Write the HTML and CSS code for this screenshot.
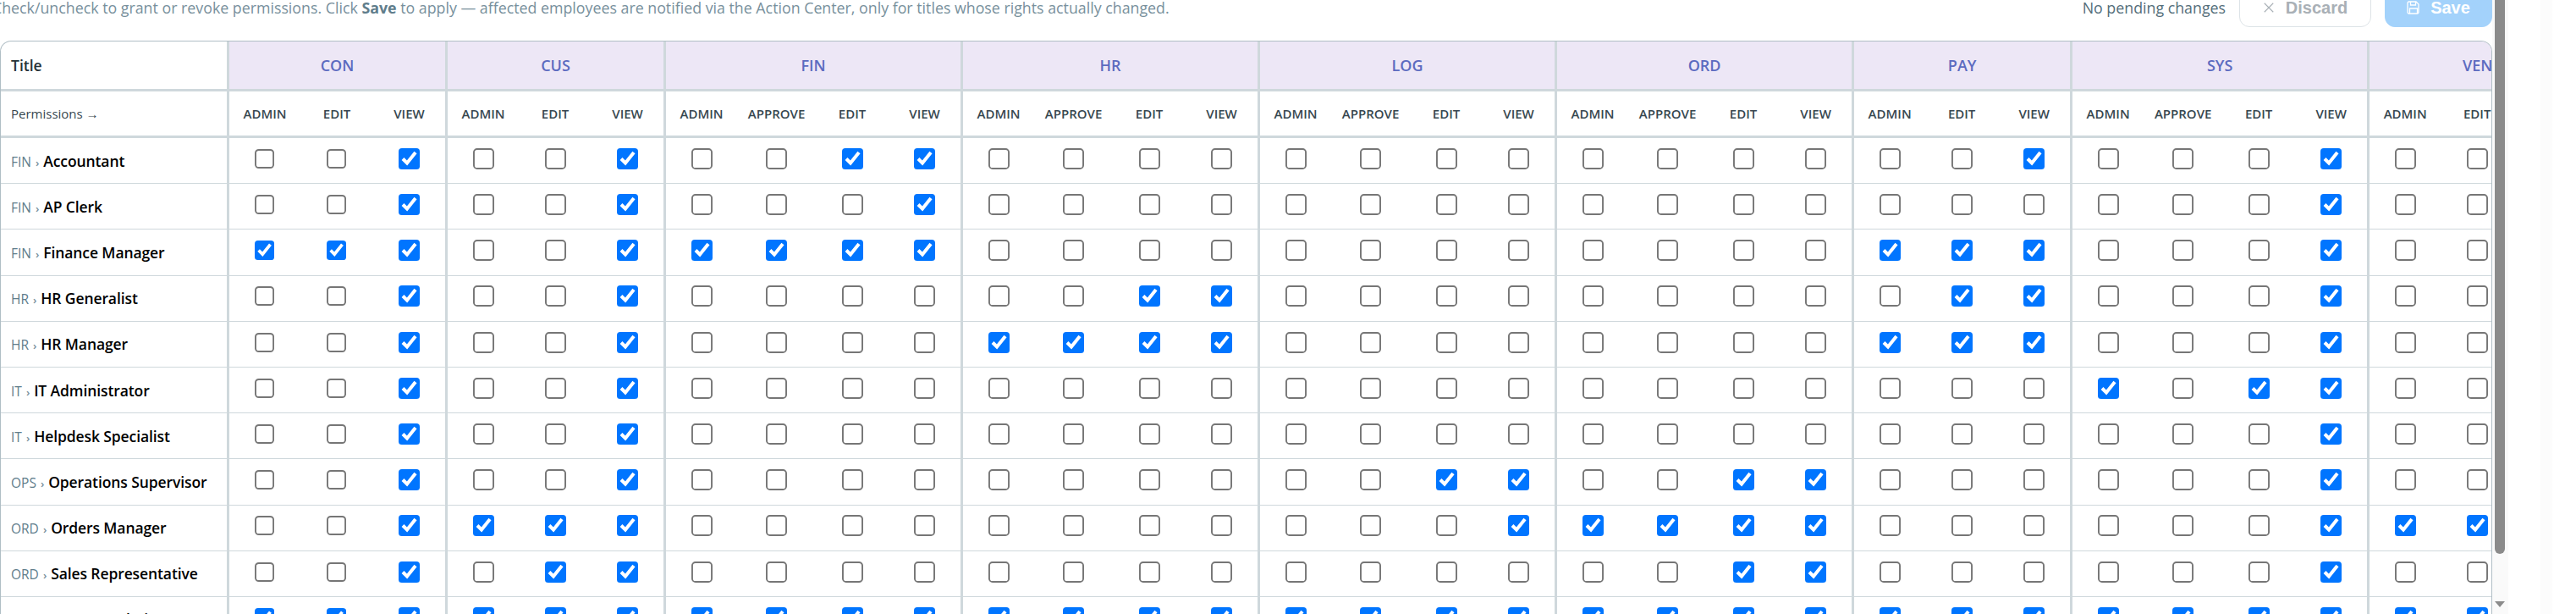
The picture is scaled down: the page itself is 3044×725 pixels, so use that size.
FILE: index.html
```html
<!DOCTYPE html>
<html lang="en">
<head>
<meta charset="utf-8">
<title>Title permissions</title>
<link rel="stylesheet" href="styles.css">
</head>
<body>
<div class="shell">
  <main class="main">
    <div class="toolbar">
      <p class="note">Check/uncheck to grant or revoke permissions. Click <strong>Save</strong> to apply — affected employees are notified via the Action Center, only for titles whose rights actually changed.</p>
      <div class="actions">
        <span class="status">No pending changes</span>
        <button class="btn btn-discard" type="button">
          <svg class="icon" viewBox="0 0 16 16"><path d="M2 2l12 12M14 2L2 14"/></svg>Discard
        </button>
        <button class="btn btn-save" type="button">
          <svg class="icon" viewBox="0 0 16 16"><path d="M2.5 1h8.5l3 3v9.5a1.5 1.5 0 0 1-1.5 1.5h-10A1.5 1.5 0 0 1 1 13.500v-11A1.500 1.500 0 0 1 2.500 1zM4.500 1v4h6V1M3.500 15V9h9v6"/></svg>Save
        </button>
      </div>
    </div>
    <div class="table-wrap">
      <table class="matrix" id="matrix"></table>
    </div>
  </main>
  <div class="scrollbar"><div class="thumb"></div><div class="arrow"></div></div>
  <div class="band"></div>
</div>
<script src="app.js"></script>
</body>
</html>
```

FILE: styles.css
```css
* { box-sizing: border-box; }
html, body { margin: 0; height: 725px; overflow: hidden; background: #fff; }
body { font-family: "Open Sans", "Noto Sans", sans-serif; color: #212529; }

.shell { display: flex; height: 725px; overflow: hidden; }
.main { flex: 0 0 2945px; width: 2945px; min-width: 0; }

.toolbar {
  display: flex; align-items: center; justify-content: space-between;
  height: 46px; margin: -14px 0 16px;
}
.note { margin: 0 0 0 -9px; font-size: 17.8px; color: #78909c; white-space: nowrap; }
.note strong { color: #607d8b; font-weight: 700; }
.actions { display: flex; align-items: center; gap: 16px; }
.status { font-size: 17.8px; color: #546e7a; white-space: nowrap; }

.btn {
  display: flex; align-items: center; justify-content: center; height: 46px;
  border-radius: 12px; font-family: "Liberation Sans", Arial, sans-serif;
  font-size: 20px; font-weight: 700; padding: 0;
}
.icon { width: 16px; height: 16px; fill: none; stroke: currentColor; stroke-width: 1.3; }
.btn-discard { width: 156px; gap: 13px; background: #fff; border: 1px solid #dde3e7; color: #a9b0b6; }
.btn-discard .icon { width: 14px; height: 14px; }
.btn-save { width: 127px; gap: 12px; background: #a3d2fb; border: 1px solid #a3d2fb; color: #fff; }

.table-wrap {
  width: 2945px; height: 700px; overflow: hidden;
  border: 1px solid #b0bec5; border-bottom: 0; border-radius: 13px 13px 0 0;
}
.matrix {
  table-layout: fixed; border-collapse: separate; border-spacing: 0;
  width: 3054px;
}
.col-title { width: 267px; }
.col-87 { width: 87px; }
.col-86 { width: 86px; }
.col-85 { width: 85px; }
.col-93 { width: 93px; }

.matrix th, .matrix td { padding: 0; text-align: center; white-space: nowrap; }
.matrix .sep { border-left: 3px solid #cfd8dc; }

.head-row th { height: 59px; border-bottom: 3px solid #cfd8dc; }
.head-title { text-align: left !important; padding-left: 12px !important; font-size: 17.5px; font-weight: 550; color: #263238; }
.head-group { background: #ede7f6; font-size: 18px; font-weight: 550; color: #5c6bc0; }

.perm-row th { height: 55px; border-bottom: 3px solid #cfd8dc; }
.perm-label { text-align: left !important; padding-left: 12px !important; font-size: 15px; font-weight: 500; color: #37474f; }
.perm-name { font-size: 15px; font-weight: 550; color: #37474f; }

.body-row td { height: 54.2px; border-bottom: 1px solid #cfd8dc; vertical-align: top; }
.body-row .name-cell { text-align: left; padding-left: 12px; vertical-align: middle; font-size: 17.5px; font-weight: 550; letter-spacing: -0.1px; color: #000; }
.prefix { font-size: 15.5px; font-weight: 400; letter-spacing: 0; color: #607d8b; }
.chevron { font-size: 13px; color: #78909c; margin: 0 5px; }

.check { display: block; margin: 6.2px auto 0; zoom: 1.923; width: 13px; height: 13px; accent-color: #0075ff; }

.scrollbar {
  flex: 0 0 19px; height: 725px; background: #fafafa;
  display: flex; flex-direction: column; justify-content: space-between; padding: 0 0 8px 3px;
}
.thumb { width: 12px; height: 654px; background: #8b8b8b; border-radius: 0 0 6px 6px; }
.arrow { width: 0; height: 0; border-style: solid; border-width: 7px 6.500px 0; border-color: #8b8b8b transparent transparent; }
.band { flex: 0 0 14px; margin-left: 38px; background: #fcfcfc; }
```

FILE: app.js
```js
var groups = [
  ["CON", "AEV"], ["CUS", "AEV"], ["FIN", "APEV"], ["HR", "APEV"], ["LOG", "APEV"],
  ["ORD", "APEV"], ["PAY", "AEV"], ["SYS", "APEV"], ["VEN", "AEV"]
];
var labels = { A: "ADMIN", P: "APPROVE", E: "EDIT", V: "VIEW" };
var rows = [
  ["FIN", "Accountant", { CON: "V", CUS: "V", FIN: "EV", PAY: "V", SYS: "V" }],
  ["FIN", "AP Clerk", { CON: "V", CUS: "V", FIN: "V", SYS: "V" }],
  ["FIN", "Finance Manager", { CON: "AEV", CUS: "V", FIN: "APEV", PAY: "AEV", SYS: "V" }],
  ["HR", "HR Generalist", { CON: "V", CUS: "V", HR: "EV", PAY: "EV", SYS: "V" }],
  ["HR", "HR Manager", { CON: "V", CUS: "V", HR: "APEV", PAY: "AEV", SYS: "V" }],
  ["IT", "IT Administrator", { CON: "V", CUS: "V", SYS: "AEV" }],
  ["IT", "Helpdesk Specialist", { CON: "V", CUS: "V", SYS: "V" }],
  ["OPS", "Operations Supervisor", { CON: "V", CUS: "V", LOG: "EV", ORD: "EV", SYS: "V" }],
  ["ORD", "Orders Manager", { CON: "V", CUS: "AEV", LOG: "V", ORD: "APEV", SYS: "V", VEN: "AE" }],
  ["ORD", "Sales Representative", { CON: "V", CUS: "EV", ORD: "EV", SYS: "V" }],
  ["ADMIN", "Super Admin", "ALL"]
];
var widths3 = ["col-87", "col-86", "col-85"];
var widths4 = ["col-87", "col-93", "col-86", "col-85"];

var html = '<colgroup><col class="col-title">';
groups.forEach(function (g) {
  (g[1].length === 3 ? widths3 : widths4).forEach(function (c) { html += '<col class="' + c + '">'; });
});
html += '</colgroup><thead><tr class="head-row"><th class="head-title">Title</th>';
groups.forEach(function (g) {
  html += '<th class="head-group sep" colspan="' + g[1].length + '">' + g[0] + '</th>';
});
html += '</tr><tr class="perm-row"><th class="perm-label">Permissions →</th>';
groups.forEach(function (g) {
  g[1].split("").forEach(function (p, i) {
    html += '<th class="perm-name' + (i === 0 ? ' sep' : '') + '">' + labels[p] + '</th>';
  });
});
html += '</tr></thead><tbody>';
rows.forEach(function (r) {
  html += '<tr class="body-row"><td class="name-cell"><span class="prefix">' + r[0] +
    '</span><span class="chevron">›</span>' + r[1] + '</td>';
  groups.forEach(function (g) {
    g[1].split("").forEach(function (p, i) {
      var on = r[2] === "ALL" || (r[2][g[0]] || "").indexOf(p) >= 0;
      html += '<td' + (i === 0 ? ' class="sep"' : '') + '><input class="check" type="checkbox"' + (on ? ' checked' : '') + '></td>';
    });
  });
  html += '</tr>';
});
html += '</tbody>';
document.getElementById("matrix").innerHTML = html;
```
